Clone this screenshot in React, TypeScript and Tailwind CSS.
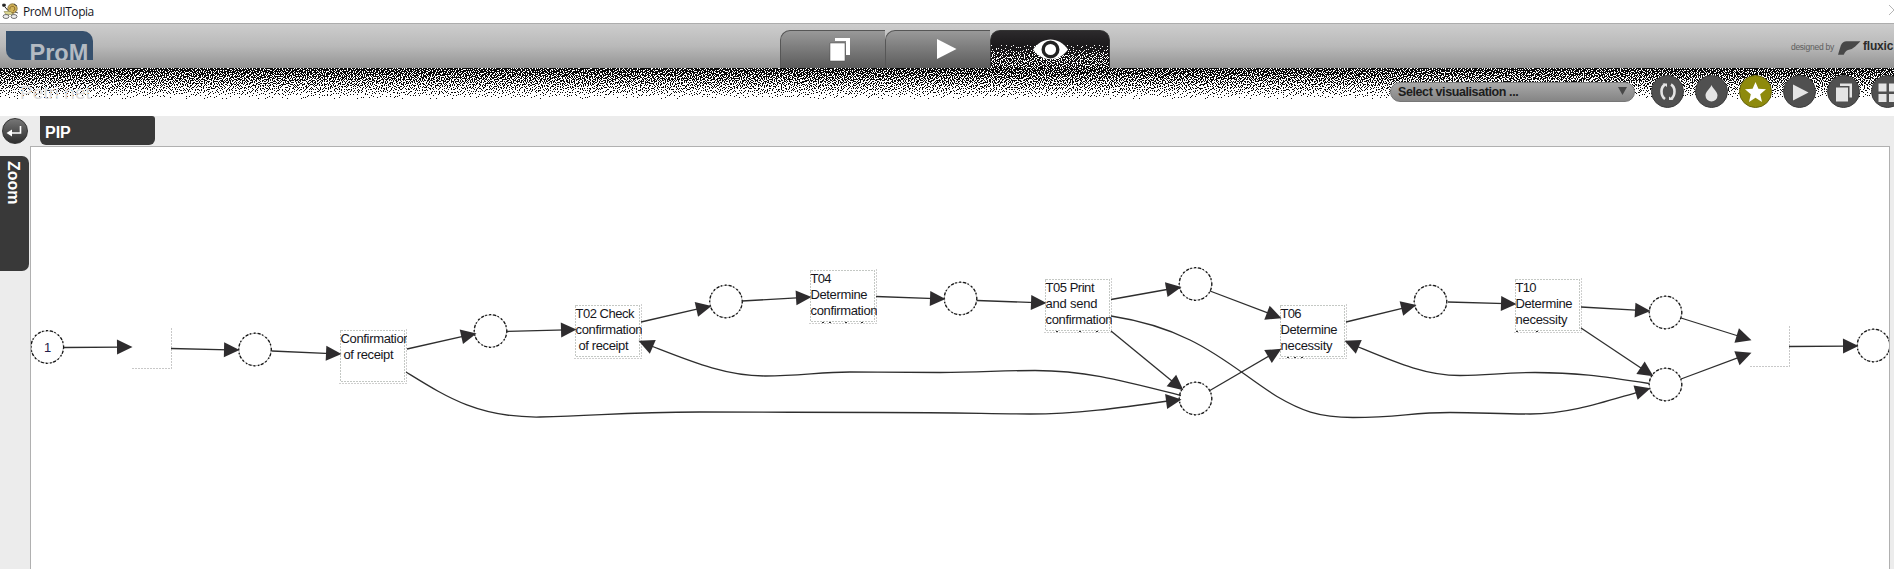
import React from "react";

type Pt = [number, number];

/* ---------- grain under the header ---------- */
function makeRandom(seed: number) {
  let s = seed;
  return () => {
    s = (s + 0x6d2b79f5) | 0;
    let t = Math.imul(s ^ (s >>> 15), 1 | s);
    t = (t + Math.imul(t ^ (t >>> 7), 61 | t)) ^ t;
    return ((t ^ (t >>> 14)) >>> 0) / 4294967296;
  };
}

/* Floyd-Steinberg diffusion of a vertical density ramp, with a jittered threshold */
function grain(width: number, height: number, seed: number, density: (y: number) => number) {
  const rnd = makeRandom(seed);
  let row = new Float32Array(width + 2);
  let d = "";
  for (let y = 0; y < height; y++) {
    const next = new Float32Array(width + 2);
    const p = density(y);
    for (let x = 0; x < width; x++) {
      const v = p + row[x + 1];
      const on = p > 0 && v > 0.5 + (rnd() - 0.5) * 1.3;
      if (on) d += `M${x} ${y}h1v1h-1z`;
      const err = v - (on ? 1 : 0);
      row[x + 2] += (err * 7) / 16;
      next[x] += (err * 3) / 16;
      next[x + 1] += (err * 5) / 16;
      next[x + 2] += err / 16;
    }
    row = next;
  }
  return d;
}

const shadowGrain = grain(1894, 31, 7, (y) => Math.max(0, 0.78 - Math.pow(y / 30, 1.05) * 0.77));
const tabGrain = grain(118, 29, 19, (y) => Math.min(0.36, Math.max(0, (y - 5) * 0.026)));

/* ---------- net ---------- */
const R = 16.3;
const places: Pt[] = [
  [47.3, 347], [255, 349.5], [490.5, 331], [726, 301.5], [960.5, 298.5], [1195.5, 284],
  [1195.5, 398.5], [1430.5, 301.5], [1665.5, 312.5], [1665.5, 384.5], [1873.5, 345.5],
];

interface EdgeShape {
  from: Pt;
  tip: Pt;
  curve?: string;
}

const edges: EdgeShape[] = [
  { from: [64, 347.5], tip: [132, 347] },
  { from: [171, 348.5], tip: [239, 350] },
  { from: [272, 351], tip: [341, 354] },
  { from: [407, 349], tip: [476, 333.5] },
  { from: [507, 331.5], tip: [576, 329.5] },
  { from: [641, 322], tip: [711, 306] },
  { from: [742, 301], tip: [811, 297] },
  { from: [876, 296.5], tip: [945, 299] },
  { from: [977, 300.5], tip: [1046, 303] },
  { from: [1111, 299.5], tip: [1181, 287] },
  { from: [1210, 291], tip: [1281, 318] },
  { from: [1111, 331], tip: [1183, 390] },
  { from: [1209, 391], tip: [1281, 349] },
  { from: [1346, 322], tip: [1416, 305] },
  { from: [1448, 302], tip: [1516, 304] },
  { from: [1581, 307], tip: [1650, 311] },
  { from: [1581, 328], tip: [1653, 376] },
  { from: [1681, 318], tip: [1751, 340] },
  { from: [1681, 379], tip: [1751, 353] },
  { from: [1789, 346.5], tip: [1858, 346] },
  {
    from: [1166, 401.5],
    tip: [1181, 399.5],
    curve: "M406 372C445 396 478 418 540 417C600 416 620 412 700 412C760 412 820 412.5 880 412.5C960 412.5 990 414 1030 414C1075 414 1120 408 1168 401",
  },
  {
    from: [653, 347],
    tip: [639, 341],
    curve: "M1181 395.5C1120 380 1085 370.5 1035 370.5C1000 370.5 980 372.5 940 372.5C900 372.5 880 372 850 372C820 372 800 376 765 376C725 376 690 361 650 345.5",
  },
  {
    from: [1636, 392.5],
    tip: [1650, 388.5],
    curve: "M1111 316C1150 322 1172 331 1190 340C1225 357 1250 380 1277 396.5C1300 410 1318 417.5 1353 417.5C1400 417.5 1410 412.5 1450 412.5C1480 412.5 1500 414 1530 414C1570 414 1605 401.5 1640 391.5",
  },
  {
    from: [1359, 347],
    tip: [1345, 341],
    curve: "M1649 383.5C1600 376 1575 372.5 1535 372.5C1500 372.5 1490 375.5 1460 375.5C1425 375.5 1395 362 1355 345.5",
  },
];

function Edge({ from, tip, curve }: EdgeShape) {
  const angle = (Math.atan2(tip[1] - from[1], tip[0] - from[0]) * 180) / Math.PI;
  const len = Math.hypot(tip[0] - from[0], tip[1] - from[1]);
  const endX = tip[0] - ((tip[0] - from[0]) * 10) / len;
  const endY = tip[1] - ((tip[1] - from[1]) * 10) / len;
  return (
    <g>
      <path d={curve ?? `M${from[0]} ${from[1]}L${endX} ${endY}`} fill="none" stroke="#2e2e2e" strokeWidth={1.3} />
      <path d="M0.5 0L-15 -7.5V7.5Z" fill="#2e2c2e" transform={`translate(${tip[0]} ${tip[1]}) rotate(${angle})`} />
    </g>
  );
}

interface Task {
  x: number;
  y: number;
  lines: string[];
  indent?: number;
  ticks: number[];
}

const tasks: Task[] = [
  { x: 340, y: 330, lines: ["Confirmation", "of receipt"], indent: 3.5, ticks: [] },
  { x: 575, y: 305, lines: ["T02 Check", "confirmation", "of receipt"], indent: 3.5, ticks: [] },
  { x: 810, y: 270, lines: ["T04", "Determine", "confirmation"], ticks: [12, 19, 35, 51] },
  { x: 1045, y: 279, lines: ["T05 Print", "and send", "confirmation"], ticks: [11, 34, 51] },
  { x: 1280, y: 305, lines: ["T06", "Determine", "necessity"], ticks: [7, 14, 21] },
  { x: 1515, y: 279, lines: ["T10", "Determine", "necessity"], ticks: [1, 21] },
];

const lineWidths: Record<string, number> = {
  Confirmation: 70,
  confirmation: 67,
  "of receipt": 50,
  "T02 Check": 59,
  T04: 21,
  T06: 21,
  T10: 21,
  Determine: 57,
  necessity: 52,
  "T05 Print": 49,
  "and send": 52,
};

function TaskNode({ x, y, lines, indent = 0, ticks }: Task) {
  return (
    <svg x={x - 2} y={y - 2} width={69} height={60} viewBox="-2 -2 69 60">
      <g fill="none" stroke="#c4c8c4" strokeDasharray="2 1" shapeRendering="crispEdges">
        <path d="M0.5 0.5H64.5V51.5H0.5Z" />
        <path d="M66.5 -1V53.5H-1" stroke="#cfcfcf" />
      </g>
      {lines.map((t, i) => (
        <text
          key={i}
          x={i === lines.length - 1 && indent ? indent : 0.5}
          y={13 + i * 16}
          fontSize={13}
          fill="#16161c"
          textLength={lineWidths[t]}
          className="font-['Liberation_Sans',sans-serif]"
        >
          {t}
        </text>
      ))}
      {ticks.map((t) => (
        <path key={t} d={`M${t} 52.5h2`} stroke="#333" />
      ))}
    </svg>
  );
}

function Net() {
  return (
    <svg className="block h-[422px] w-[1860px]" viewBox="31 147 1860 422">
      {places.map(([x, y], i) => (
        <g key={i}>
          <circle cx={x} cy={y} r={R} fill="#fff" stroke="#999" strokeWidth={0.7} />
          <circle cx={x} cy={y} r={R} fill="none" stroke="#151515" strokeWidth={1.3} strokeDasharray="2 2 3 1.5 1.5 2.5" />
        </g>
      ))}
      <text x={44} y={352} fontSize={13} fill="#23204a" className="font-['Liberation_Sans',sans-serif]">1</text>
      <g fill="none" stroke="#c8c8c8" strokeDasharray="2 1" shapeRendering="crispEdges">
        <path d="M171.5 328V368.5H131" />
        <path d="M1789.5 326V366.5H1749" />
      </g>
      {tasks.map((t) => (
        <TaskNode key={t.x} {...t} />
      ))}
      {edges.map((e, i) => (
        <Edge key={i} {...e} />
      ))}
    </svg>
  );
}

/* ---------- toolbar ---------- */
function RoundButton({ active, children }: { active?: boolean; children: React.ReactNode }) {
  return (
    <div
      className={
        active
          ? "size-[33px] shrink-0 rounded-full border border-[#66640f] bg-[#8e8a0c]"
          : "size-[33px] shrink-0 rounded-full border border-[#3c3c3c] bg-[#505050]"
      }
    >
      <svg viewBox="1 1 31 31" className="block size-[31px]" fill="#e4e4e4">
        {children}
      </svg>
    </div>
  );
}

function TitleBar() {
  return (
    <div className="flex h-[23px] items-center justify-between overflow-hidden bg-white">
      <div className="flex items-center">
        <svg className="ml-[2px] mt-[-1px] h-[17px] w-[17px]" viewBox="0 0 17 17">
          <circle cx="10.5" cy="5.5" r="4.7" fill="#d2b45a" stroke="#6f5a28" strokeWidth=".7" />
          <path d="M8 6.5a2.5 2.5 0 1 1 3 1.6M7 9.5l5 .5" fill="none" stroke="#8d6c2c" />
          <path d="M.8 1.2h2.4v2H.8zM3 4l3 3.5" fill="#222" stroke="#222" />
          <path d="M2 8.5h7l2 3H4z" fill="#d9d48e" stroke="#77733c" strokeWidth=".5" />
          <ellipse cx="4" cy="13.5" rx="3" ry="2" fill="#eee" stroke="#555" strokeWidth=".8" />
          <ellipse cx="12" cy="13.5" rx="3" ry="2" fill="#eee" stroke="#555" strokeWidth=".8" />
          <path d="M12 1l3 2M13 9l3 1" stroke="#333" strokeWidth=".8" />
        </svg>
        <span className="ml-[4px] mt-[1px] font-['Open_Sans',sans-serif] text-[12px] leading-[20px] tracking-[-0.45px] text-[#15151c]">ProM UITopia</span>
      </div>
      <svg className="mt-[-3px] h-[10px] w-[5px]" viewBox="0 0 5 10">
        <path d="M0 0l10 10M0 10L10 0" stroke="#b4b4b4" />
      </svg>
    </div>
  );
}

function Header() {
  return (
    <div className="flex h-[45px] justify-between border-t border-[#adadad] bg-gradient-to-b from-[#cdcdcd] via-[#b9b9b9] to-[#949494]">
      <div className="flex w-[780px] pl-[6px] pt-[7px]">
        <div className="h-[29px] w-[87px] overflow-hidden rounded-bl-[10px] rounded-tr-[10px] bg-[#36506d] pl-[23.500px] pt-[9px] font-['Liberation_Sans',sans-serif] text-[23.500px] font-bold leading-[26px] text-[#b3bac2]">
          ProM
        </div>
      </div>
      <div className="mt-[6px] flex h-[38px] w-[330px]">
        <div className="flex w-[105px] rounded-tl-[10px] border-l border-t border-[#565656] bg-gradient-to-b from-[#999] to-[#5c5c5c]">
          <svg className="ml-[48px] mt-[6px] h-[25px] w-[22px]" viewBox="0 0 22 25">
            <path d="M6 1H21V18H17V4H6Z" fill="#fff" />
            <path d="M1 6H16V24H1Z" fill="#fff" stroke="#444" strokeWidth=".5" />
          </svg>
        </div>
        <div className="flex w-[105px] rounded-tl-[10px] border-l border-t border-[#565656] bg-gradient-to-b from-[#999] to-[#5c5c5c]">
          <svg className="ml-[50px] mt-[7px] h-[22px] w-[22px]" viewBox="0 0 22 22">
            <path d="M1 1L20.5 11L1 21Z" fill="#fff" />
          </svg>
        </div>
        <div className="relative w-[120px] rounded-t-[10px] border-x border-t border-[#333] bg-gradient-to-b from-[#2c2a2c] via-[#181618] to-[#0c0c0c]">
          <svg className="block h-[37px] w-[118px]" viewBox="0 0 118 37" shapeRendering="crispEdges">
            <path d={tabGrain} fill="#fff" transform="translate(0 8)" />
          </svg>
          <svg className="absolute left-[42px] top-[8px] h-[21px] w-[35px]" viewBox="0 0 35 21">
            <path d="M0 10.5C9 -3 26 -3 35 10.5C26 23.5 9 23.5 0 10.5Z" fill="#fff" />
            <circle cx="17.5" cy="10.5" r="7.3" fill="#fff" stroke="#222" strokeWidth="3.4" />
          </svg>
        </div>
      </div>
      <div className="flex w-[784px] items-center justify-end overflow-hidden pt-[2px] font-['Liberation_Sans',sans-serif]">
        <span className="whitespace-nowrap text-[8.500px] leading-[12px] tracking-[-0.25px] text-[#5d5d5d]">designed by</span>
        <svg className="ml-[4px] mt-[3px] h-[15px] w-[23px]" viewBox="0 0 24 15">
          <path d="M0 14L3 4Q5 0 9 0H23.5L18 5.5Q15 8.500 10.500 9Q8 9.500 6 14Z" fill="#484848" />
        </svg>
        <span className="ml-[2px] mt-[-3px] w-[31px] whitespace-nowrap text-[12px] font-bold leading-[14px] tracking-[-0.2px] text-[#2b2b2b]">fluxic</span>
      </div>
    </div>
  );
}

function SubHeader() {
  return (
    <div className="relative flex h-[48px] overflow-hidden bg-white">
      <svg className="absolute left-0 top-0 h-[31px] w-[1894px]" viewBox="0 0 1894 31" shapeRendering="crispEdges">
        <path d={shadowGrain} fill="#0a0a0a" />
      </svg>
      <div className="relative ml-[20px] mt-[14px] w-[1370px] shrink-0 font-['Liberation_Sans',sans-serif] text-[19px] leading-[22px] text-[#dcdcdc]">Petri net</div>
      <div className="relative mt-[14px] flex h-[20px] w-[245px] shrink-0 items-center justify-between rounded-full border border-[#777] bg-gradient-to-b from-[#a8a8a8] to-[#858585] pl-[7px] pr-[7px] font-['Liberation_Sans',sans-serif]">
        <span className="whitespace-nowrap text-[12.500px] font-bold leading-[18px] tracking-[-0.4px] text-[#1c1c1c]">Select visualisation ...</span>
        <svg className="mt-[-2px] h-[8px] w-[9px]" viewBox="0 0 9 8">
          <path d="M0 0H9L4.5 8Z" fill="#484848" />
        </svg>
      </div>
      <div className="relative ml-[16px] mt-[7px] flex shrink-0 gap-[11px]">
        <RoundButton>
          <path d="M14 9.5Q10.5 11.5 10.5 16.5T14 24M20 9.5Q23.5 11.5 23.5 16.5T20 24" fill="none" stroke="#e4e4e4" strokeWidth="2.6" />
          <path d="M11.5 8.5h4.5v3.5zM22.5 25h-4.5v-3.5z" />
        </RoundButton>
        <RoundButton>
          <path d="M16.5 10C18 14 22.500 16.500 22.500 20.500A6 6 0 0 1 10.500 20.500C10.500 16.500 15 14 16.500 10Z" />
        </RoundButton>
        <RoundButton active>
          <path fill="#fff" d="M16.5 7L19.4 13.7L27 14.3L21.2 19.3L23 27L16.5 22.8L10 27L11.8 19.3L6 14.3L13.6 13.7Z" />
        </RoundButton>
        <RoundButton>
          <path d="M10 9.5L25.5 17.5L10 25.5Z" />
        </RoundButton>
        <RoundButton>
          <path d="M13 8.5H25V22.5H22.5V11H13Z" />
          <path d="M9 12.5H21V26.5H9Z" />
        </RoundButton>
        <RoundButton>
          <path d="M7.5 8.500h8v8h-8zM18 8.500h8v8h-8zM7.5 19h8v8h-8zM18 19h8v8h-8z" />
        </RoundButton>
      </div>
    </div>
  );
}

export default function App() {
  return (
    <div className="flex h-[569px] w-[1894px] flex-col overflow-hidden bg-[#ececec]">
      <TitleBar />
      <Header />
      <SubHeader />
      <div className="flex flex-1 overflow-hidden">
        <div className="flex w-[30px] shrink-0 flex-col">
          <div className="ml-[2px] mt-[2px] flex size-[26px] items-center justify-center rounded-full border border-[#333] bg-gradient-to-b from-[#777] to-[#2f2f2f]">
            <svg className="size-[20px]" viewBox="0 0 20 20">
              <path d="M15.5 5V12H5" fill="none" stroke="#fff" strokeWidth="1.6" />
              <path d="M1.5 12L7 8.5V15.5Z" fill="#fff" />
            </svg>
          </div>
          <div className="mt-[12px] flex h-[115px] w-[29px] items-center rounded-r-[7px] bg-[#393939] pr-[4px] pt-[5px] font-['Liberation_Sans',sans-serif] text-[16px] font-bold leading-[20px] text-white [writing-mode:vertical-rl]">
            <span className="h-[107px]">Zoom</span>
          </div>
        </div>
        <div className="flex min-w-0 flex-1 flex-col">
          <div className="h-[30px] pl-[10px]">
            <div className="h-[29px] w-[115px] rounded-b-[6px] rounded-tr-[3px] bg-[#393939] pl-[5px] pt-[1px] font-['Liberation_Sans',sans-serif] text-[16px] font-bold leading-[31px] text-white">
              PIP
            </div>
          </div>
          <div className="mr-[4px] flex-1 overflow-hidden border-x border-t border-[#b0b0b0] bg-white">
            <Net />
          </div>
        </div>
      </div>
    </div>
  );
}
